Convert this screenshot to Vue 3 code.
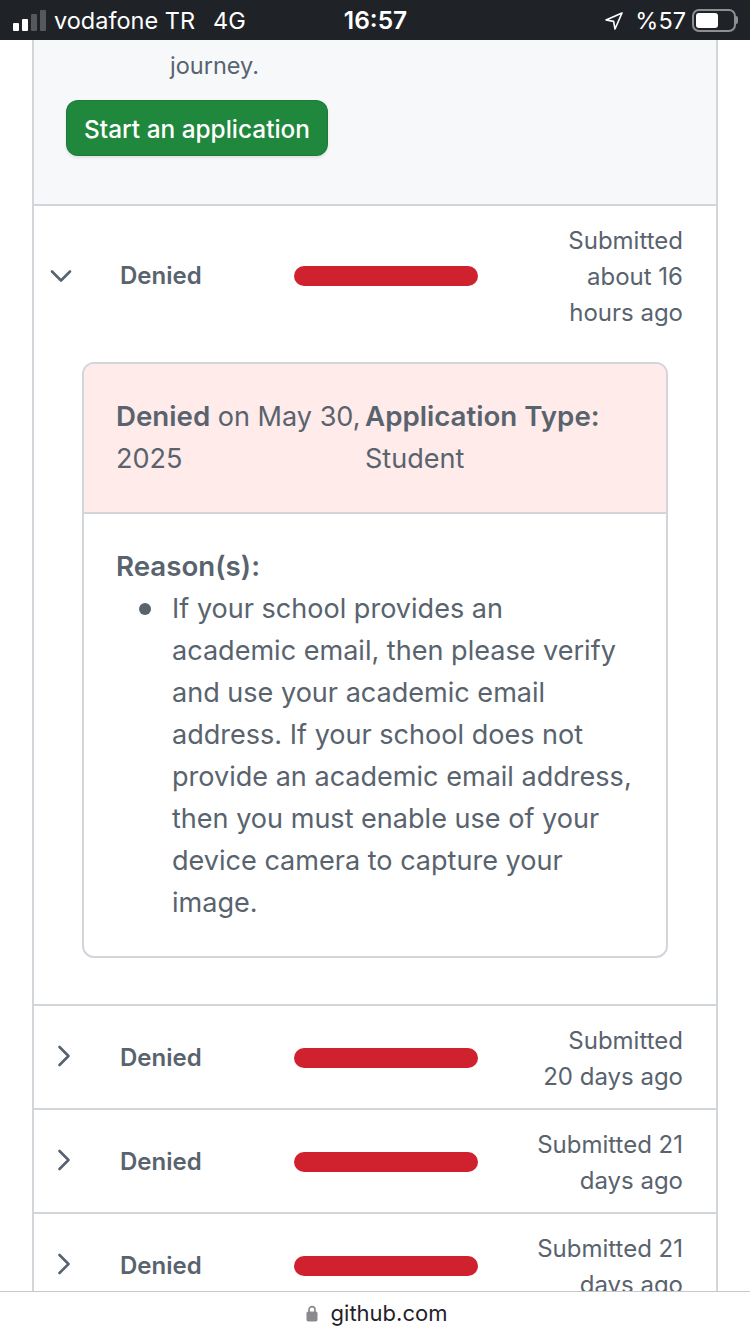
<template>
  <div class="screen">
    <!-- iOS status bar -->
    <header class="status-bar">
      <div class="status-left">
        <div class="signal">
          <span v-for="bar in signalBars" :key="bar.height" class="signal-bar" :class="{ off: bar.off }" :style="{ height: bar.height + 'px' }"></span>
        </div>
        <span class="carrier">vodafone TR</span>
        <span class="network">4G</span>
      </div>
      <div class="clock">16:57</div>
      <div class="status-right">
        <svg class="arrow" viewBox="0 0 18 18" width="18" height="18">
          <path d="M17 1 1 8l7.6 1.4L10 17z" fill="none" stroke="#fff" stroke-width="1.6" stroke-linejoin="round" />
        </svg>
        <span class="percent">%57</span>
        <div class="battery">
          <div class="battery-level"></div>
        </div>
        <div class="battery-cap"></div>
      </div>
    </header>

    <main class="page">
      <section class="box">
        <div class="intro">
          <p class="intro-text">journey.</p>
          <button class="start-button" type="button">Start an application</button>
        </div>

        <!-- Expanded application -->
        <div class="application">
          <div class="row">
            <svg class="chevron" viewBox="0 0 22 14" width="22" height="14">
              <path d="M2 2.5 11 11.5 20 2.5" fill="none" stroke="#59636e" stroke-width="2.6" stroke-linecap="round" stroke-linejoin="round" />
            </svg>
            <span class="state">Denied</span>
            <span class="redaction"></span>
            <span class="submitted">Submitted<br />about 16<br />hours ago</span>
          </div>

          <div class="detail-card">
            <div class="detail-head">
              <div><strong>Denied</strong> on May 30, 2025</div>
              <div><strong>Application Type:</strong> Student</div>
            </div>
            <div class="detail-body">
              <strong>Reason(s):</strong>
              <ul class="reasons">
                <li>If your school provides an academic email, then please verify and use your academic email address. If your school does not provide an academic email address, then you must enable use of your device camera to capture your image.</li>
              </ul>
            </div>
          </div>
        </div>

        <!-- Collapsed applications -->
        <div v-for="(item, index) in collapsed" :key="index" class="application">
          <div class="row">
            <svg class="chevron chevron-right" viewBox="0 0 14 22" width="14" height="22">
              <path d="M2.5 2 11.5 11 2.5 20" fill="none" stroke="#59636e" stroke-width="2.6" stroke-linecap="round" stroke-linejoin="round" />
            </svg>
            <span class="state">Denied</span>
            <span class="redaction"></span>
            <span class="submitted">{{ item[0] }}<br />{{ item[1] }}</span>
          </div>
        </div>
      </section>
    </main>

    <footer class="address-bar">
      <svg class="lock" viewBox="0 0 12 17" width="12" height="17">
        <path d="M3 7V4.6a3 3 0 0 1 6 0V7" fill="none" stroke="#8a8a8e" stroke-width="1.7" />
        <rect x="0.5" y="6.5" width="11" height="10" rx="1.8" fill="#8a8a8e" />
      </svg>
      <span>github.com</span>
    </footer>
  </div>
</template>

<script setup>
const signalBars = [
  { height: 8, off: false },
  { height: 12, off: false },
  { height: 17, off: true },
  { height: 21, off: true }
]

const collapsed = [
  ['Submitted', '20 days ago'],
  ['Submitted 21', 'days ago'],
  ['Submitted 21', 'days ago']
]
</script>

<style>
body {
  background: #fff;
}
</style>

<style scoped>
.screen {
  display: flex;
  flex-direction: column;
  width: 750px;
  height: 1334px;
  overflow: hidden;
  font-family: Inter, "Liberation Sans", sans-serif;
  color: #59636e;
  background: #fff;
}

/* Status bar */
.status-bar {
  display: grid;
  grid-template-columns: 1fr auto 1fr;
  align-items: center;
  flex: none;
  height: 40px;
  padding: 0 12px 0 13px;
  box-sizing: border-box;
  background: #1f2328;
  color: #fff;
  font-size: 23.5px;
}

.status-left,
.status-right {
  display: flex;
  align-items: center;
}

.status-right {
  justify-content: flex-end;
}

.signal {
  display: flex;
  align-items: flex-end;
  gap: 3px;
  height: 21px;
  margin-right: 8px;
}

.signal-bar {
  width: 6px;
  border-radius: 1px;
  background: #fff;
}

.signal-bar.off {
  background: #55595e;
}

.network {
  margin-left: 18px;
}

.clock {
  font-size: 24.5px;
  font-weight: 600;
}

.arrow {
  margin: 2px 12px 0 0;
}

.percent {
  margin-right: 6px;
}

.battery {
  width: 44px;
  height: 23px;
  padding: 2px;
  box-sizing: border-box;
  border: 2px solid #8d8f92;
  border-radius: 7px;
}

.battery-level {
  width: 22px;
  height: 100%;
  border-radius: 3px;
  background: #fff;
}

.battery-cap {
  width: 2px;
  height: 8px;
  border-radius: 0 2px 2px 0;
  background: #8d8f92;
}

/* Page */
.page {
  flex: 1;
  min-height: 0;
  overflow: hidden;
  padding: 0 32px;
}

.box {
  border-left: 2px solid #d2d6da;
  border-right: 2px solid #d2d6da;
}

.intro {
  height: 164px;
  padding: 5px 32px 0;
  box-sizing: border-box;
  background: #f6f8fa;
}

.intro-text {
  margin: 0 0 13px;
  padding-left: 104px;
  font-size: 23.5px;
  line-height: 42px;
}

.start-button {
  display: block;
  width: 262px;
  height: 56px;
  padding: 2px 0 0;
  border: 1px solid rgba(31, 35, 40, 0.15);
  border-radius: 12px;
  background: #1f883d;
  box-shadow: 0 2px 3px rgba(31, 35, 40, 0.1);
  color: #fff;
  font-family: inherit;
  font-size: 24.4px;
  font-weight: 500;
}

.application {
  border-top: 2px solid #d2d6da;
}

.row {
  display: flex;
  align-items: center;
  padding: 16px 33px 14px 16px;
}

.chevron {
  flex: none;
  width: 22px;
  margin-right: 48px;
}

.chevron-right {
  position: relative;
  top: -2px;
  width: 14px;
  margin-left: 7px;
  margin-right: 49px;
}

.state {
  flex: none;
  width: 174px;
  margin-bottom: 1px;
  font-size: 24px;
  font-weight: 600;
}

.redaction {
  flex: none;
  width: 184px;
  height: 20px;
  border-radius: 10px;
  background: #cf222e;
}

.submitted {
  flex: 1;
  margin: 1px 0 -1px;
  font-size: 24px;
  line-height: 36px;
  text-align: right;
}

.detail-card {
  margin: 18px 48px 46px;
  border: 2px solid #d2d6da;
  border-radius: 12px;
  overflow: hidden;
  font-size: 27.05px;
  line-height: 42px;
}

.detail-head {
  display: grid;
  grid-template-columns: 249px 1fr;
  height: 150px;
  padding: 31px 32px 0;
  box-sizing: border-box;
  border-bottom: 2px solid #d2d6da;
  background: #ffebe9;
}

.detail-head strong,
.detail-body strong {
  font-size: 27.7px;
  font-weight: 600;
}

.detail-body {
  padding: 31px 33px 32px 32px;
}

.reasons {
  margin: 0;
  padding-left: 56px;
  list-style: none;
}

.reasons li {
  position: relative;
}

.reasons li::before {
  content: "";
  position: absolute;
  left: -33px;
  top: 15px;
  width: 12px;
  height: 12px;
  border-radius: 50%;
  background: #59636e;
}

/* Safari address bar */
.address-bar {
  display: flex;
  align-items: center;
  justify-content: center;
  flex: none;
  gap: 13px;
  height: 43px;
  padding-left: 3px;
  box-sizing: border-box;
  border-top: 1px solid #c8c8cc;
  background: #fff;
  color: #1f2328;
  font-size: 22px;
}

.lock {
  flex: none;
}
</style>
